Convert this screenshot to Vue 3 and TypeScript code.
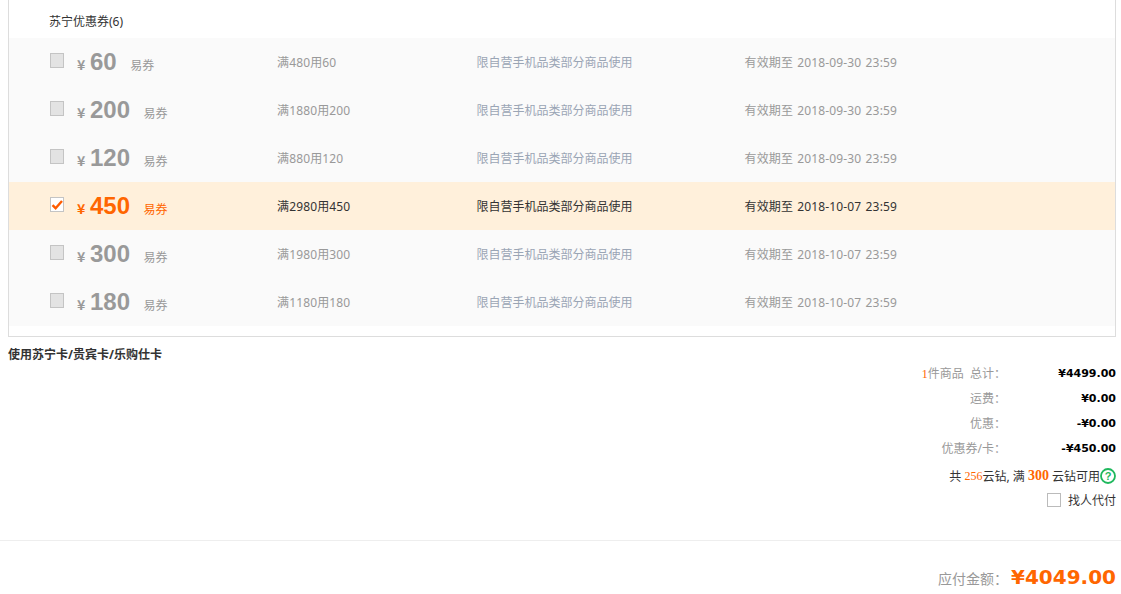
<script setup lang="ts">
interface Coupon {
  amount: number
  rule: string
  expires: string
  checked?: boolean
}

const coupons: Coupon[] = [
  { amount: 60, rule: '满480用60', expires: '2018-09-30 23:59' },
  { amount: 200, rule: '满1880用200', expires: '2018-09-30 23:59' },
  { amount: 120, rule: '满880用120', expires: '2018-09-30 23:59' },
  { amount: 450, rule: '满2980用450', expires: '2018-10-07 23:59', checked: true },
  { amount: 300, rule: '满1980用300', expires: '2018-10-07 23:59' },
  { amount: 180, rule: '满1180用180', expires: '2018-10-07 23:59' },
]

const totals = [
  { label: '总计：', value: '¥4499.00', count: 1 },
  { label: '运费：', value: '¥0.00' },
  { label: '优惠：', value: '-¥0.00' },
  { label: '优惠券/卡：', value: '-¥450.00' },
]
</script>

<template>
  <div class="page">
    <div class="coupon-box">
      <div class="box-title">苏宁优惠券(6)</div>
      <div v-for="c in coupons" :key="c.amount" class="coupon-row" :class="{ active: c.checked }">
        <span class="check">
          <svg v-if="c.checked" width="12" height="12" viewBox="0 0 12 12">
            <path d="M1.5 6.2 L4.6 9.2 L11 2" fill="none" stroke="#ff5c00" stroke-width="2.4" />
          </svg>
        </span>
        <div class="price">
          <span class="yen">¥</span>
          <span class="amount">{{ c.amount }}</span>
          <span class="kind">易券</span>
        </div>
        <span class="rule">{{ c.rule }}</span>
        <span class="scope">限自营手机品类部分商品使用</span>
        <span class="expires">有效期至 {{ c.expires }}</span>
      </div>
    </div>

    <div class="card-title">使用苏宁卡/贵宾卡/乐购仕卡</div>

    <div class="summary">
      <div v-for="t in totals" :key="t.label" class="total-row">
        <span class="total-label">
          <template v-if="t.count"><em class="count">{{ t.count }}</em>件商品&nbsp;&nbsp;</template>{{ t.label }}
        </span>
        <span class="total-value">{{ t.value }}</span>
      </div>
      <div class="diamond">
        共 <em class="small-num">256</em>云钻, 满 <em class="big-num">300</em> 云钻可用<svg class="help" width="16" height="16" viewBox="0 0 16 16">
          <circle cx="8" cy="8" r="7" fill="none" stroke="#1fb85d" stroke-width="1.8" />
          <text x="8" y="12" text-anchor="middle" class="help-mark">?</text>
        </svg>
      </div>
      <label class="proxy">
        <span class="proxy-box"></span>
        找人代付
      </label>
    </div>

    <div class="pay-line">
      <span class="pay-label">应付金额：</span>
      <span class="pay-value">¥4049.00</span>
    </div>
  </div>
</template>

<style scoped>
.page {
  width: 1121px;
  height: 594px;
  overflow: hidden;
  background: #fff;
  font-family: "Noto Sans", "Noto Sans CJK SC", sans-serif;
  font-size: 12px;
  color: #333;
}

.coupon-box {
  margin: 0 5px 0 8px;
  height: 337px;
  box-sizing: border-box;
  border: 1px solid #ddd;
  border-top: 0;
}

.box-title {
  height: 38px;
  padding: 14px 0 0 40px;
  box-sizing: border-box;
  line-height: 16px;
  color: #333;
}

.coupon-row {
  display: flex;
  align-items: center;
  height: 48px;
  background: #fafafa;
  color: #999;
  font-size: 12px;
}

.coupon-row.active {
  background: #fff0db;
  color: #333;
}

.check {
  width: 14px;
  height: 15px;
  margin-left: 41px;
  margin-top: -3px;
  box-sizing: border-box;
  border: 1px solid #c4c4c4;
  background: #e3e3e3;
  display: flex;
  align-items: center;
  justify-content: center;
}

.active .check {
  background: #fff;
}

.price {
  width: 200px;
  margin-left: 13px;
  display: flex;
  align-items: baseline;
}

.yen {
  font-family: "Noto Sans CJK SC", sans-serif;
  font-size: 14px;
  font-weight: 700;
  width: 13px;
}

.amount {
  font-family: "Liberation Sans", sans-serif;
  font-size: 24px;
  font-weight: 700;
}

.kind {
  margin-left: 13.5px;
  font-family: "Noto Sans CJK SC", sans-serif;
  font-size: 12px;
}

.active .yen,
.active .amount,
.active .kind {
  color: #ff6600;
}

.rule {
  width: 199.5px;
  letter-spacing: 0.14px;
}

.scope {
  width: 268px;
}

.coupon-row:not(.active) .scope {
  color: #9aa5b5;
}

.expires {
  font-size: 12px;
  letter-spacing: 0.14px;
  word-spacing: 1px;
}

.card-title {
  margin: 10px 0 0 8px;
  line-height: 16px;
  font-weight: 700;
  color: #333;
}

.summary {
  margin: -3px 5px 0 0;
  height: 181px;
  box-sizing: border-box;
  display: flex;
  flex-direction: column;
  align-items: flex-end;
}

.total-row {
  display: flex;
  height: 25px;
  align-items: center;
}

.total-label {
  color: #999;
}

.count {
  font-style: normal;
  color: #ff6600;
  font-family: "Liberation Serif", serif;
}

.total-value {
  width: 110px;
  padding-top: 2px;
  text-align: right;
  color: #000;
  font-family: "DejaVu Sans", sans-serif;
  font-size: 11px;
  font-weight: 700;
}

.diamond {
  margin-top: 4px;
  height: 24px;
  display: flex;
  align-items: center;
  white-space: pre;
  color: #333;
}

.small-num {
  font-style: normal;
  color: #ff6600;
  font-family: "Liberation Serif", serif;
  font-size: 12px;
}

.big-num {
  font-style: normal;
  font-weight: 700;
  color: #ff6600;
  font-family: "Liberation Serif", serif;
  font-size: 14px;
}

.help-mark {
  font-family: "Liberation Sans", sans-serif;
  font-size: 11px;
  font-weight: 700;
  fill: #1fb85d;
}

.proxy {
  height: 24px;
  display: flex;
  align-items: center;
  color: #333;
}

.proxy-box {
  width: 14px;
  height: 14px;
  box-sizing: border-box;
  border: 1px solid #bbb;
  margin-right: 7px;
}

.pay-line {
  border-top: 1px solid #eee;
  margin-top: -1px;
  height: 54px;
  display: flex;
  justify-content: flex-end;
  align-items: flex-end;
  padding: 0 5px 2px 0;
  box-sizing: border-box;
}

.pay-label {
  color: #999;
  font-size: 14px;
  margin: 0 3px 1px 0;
  line-height: 24px;
}

.pay-value {
  color: #ff6600;
  font-family: "DejaVu Sans", sans-serif;
  font-size: 20px;
  font-weight: 700;
  line-height: 30px;
}
</style>
